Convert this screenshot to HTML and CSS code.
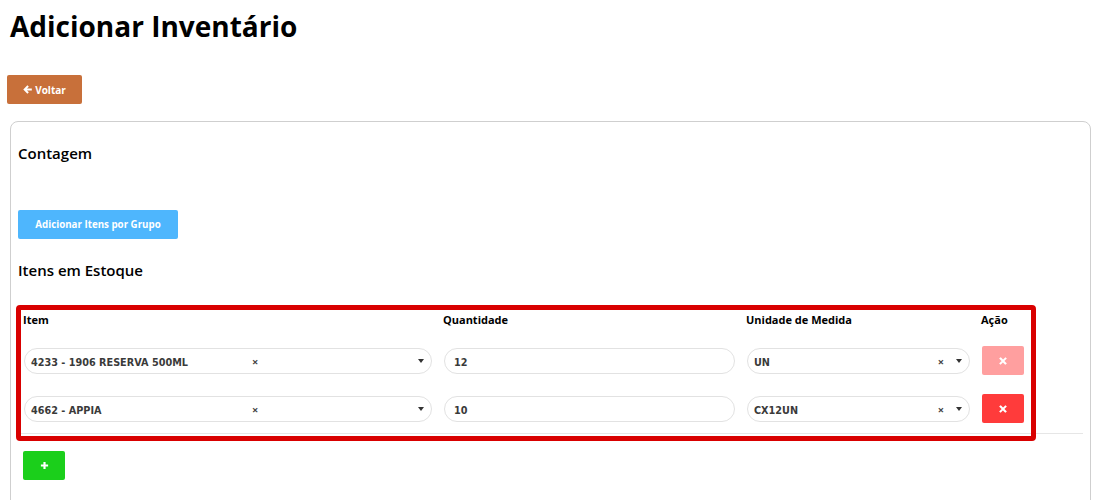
FILE: index.html
```html
<!DOCTYPE html>
<html lang="pt-BR">
<head>
<meta charset="utf-8">
<title>Adicionar Inventário</title>
<link rel="stylesheet" href="styles.css">
</head>
<body>
<main class="page">
  <h1 class="title">Adicionar Inventário</h1>
  <a class="btn btn-back" href="#">
    <svg class="ico-arrow" viewBox="0 0 10 10" width="9" height="9"><path d="M4.9 0.4 L6.5 2 L4.4 4 H9.8 V6 H4.4 L6.5 8 L4.9 9.6 L0.3 5 Z" fill="#fff"/></svg>
    <span>Voltar</span>
  </a>

  <section class="card">
    <h2 class="section-title">Contagem</h2>
    <button class="btn btn-group" type="button">Adicionar Itens por Grupo</button>
    <h2 class="section-title section-title--stock">Itens em Estoque</h2>

    <div class="stock">
      <div class="stock-table">
        <div class="grid-row grid-head">
          <div class="th">Item</div>
          <div class="th">Quantidade</div>
          <div class="th">Unidade de Medida</div>
          <div class="th">Ação</div>
        </div>

        <div class="grid-row">
          <div class="select select--item">
            <span class="select-text">4233 - 1906 RESERVA 500ML</span>
            <span class="select-clear">×</span>
            <span class="select-caret"></span>
          </div>
          <div class="input">12</div>
          <div class="select select--unit">
            <span class="select-text">UN</span>
            <span class="select-clear">×</span>
            <span class="select-caret"></span>
          </div>
          <button class="btn btn-del btn-del--disabled" type="button">
            <svg viewBox="0 0 10 10" width="8" height="8"><path d="M2 2 L8 8 M8 2 L2 8" stroke="#fff" stroke-width="2.6" stroke-linecap="square"/></svg>
          </button>
        </div>

        <div class="grid-row">
          <div class="select select--item">
            <span class="select-text">4662 - APPIA</span>
            <span class="select-clear">×</span>
            <span class="select-caret"></span>
          </div>
          <div class="input">10</div>
          <div class="select select--unit">
            <span class="select-text">CX12UN</span>
            <span class="select-clear">×</span>
            <span class="select-caret"></span>
          </div>
          <button class="btn btn-del" type="button">
            <svg viewBox="0 0 10 10" width="8" height="8"><path d="M2 2 L8 8 M8 2 L2 8" stroke="#fff" stroke-width="2.6" stroke-linecap="square"/></svg>
          </button>
        </div>
      </div>
      <div class="highlight"></div>
    </div>

    <button class="btn btn-add" type="button">
      <svg viewBox="0 0 10 10" width="9" height="9"><path d="M5 1 V9 M1 5 H9" stroke="#fff" stroke-width="2.4"/></svg>
    </button>
  </section>
</main>
</body>
</html>
```

FILE: styles.css
```css
* { box-sizing: border-box; }

html, body {
  margin: 0;
  background: #fff;
}

body {
  font-family: "Open Sans", "DejaVu Sans", sans-serif;
  color: #111;
}

.page {
  padding: 0 0 0 7px;
  width: 1091px;
}

.title {
  margin: 6px 0 0 3px;
  font-size: 28px;
  line-height: 40px;
  font-weight: 700;
  color: #000;
}

.btn {
  border: 0;
  border-radius: 2px;
  color: #fff;
  font-family: inherit;
  font-weight: 700;
  cursor: pointer;
  display: inline-flex;
  align-items: center;
  justify-content: center;
  text-decoration: none;
  padding: 0;
}

.btn-back {
  margin-top: 29px;
  width: 75px;
  height: 29px;
  background: #c8703a;
  font-size: 10px;
  gap: 3px;
}

.card {
  margin: 17px 0 0 3px;
  border: 1px solid #cfcfcf;
  border-radius: 8px;
  padding: 21px 7px 30px 7px;
  display: flex;
  flex-direction: column;
  align-items: flex-start;
}

.section-title {
  margin: 0;
  font-size: 15px;
  line-height: 20px;
  font-weight: 600;
  color: #000;
}

.btn-group {
  margin-top: 47px;
  width: 160px;
  height: 29px;
  background: #4eb6fd;
  font-size: 9.75px;
}

.section-title--stock {
  margin-top: 21px;
}

.stock {
  position: relative;
  margin-top: 26px;
  width: 100%;
}

.stock-table {
  padding: 6px 0 10px 6px;
  border-bottom: 1px solid #e6e6e6;
  display: flex;
  flex-direction: column;
}

.grid-row {
  display: grid;
  grid-template-columns: 408px 291px 223px 42px;
  column-gap: 12px;
  align-items: center;
  height: 29px;
}

.grid-row + .grid-row { margin-top: 19px; }
.grid-head + .grid-row { margin-top: 18px; }

.grid-head {
  height: 16px;
}

.th {
  font-size: 11px;
  line-height: 16px;
  font-weight: 700;
  color: #000;
  margin-left: -1px;
}

.select, .input {
  height: 26px;
  border: 1px solid #e2e2e2;
  border-radius: 13px;
  display: flex;
  align-items: center;
  padding: 0 0 0 6px;
  font-family: "DejaVu Sans", "Open Sans", sans-serif;
  font-size: 9.7px;
  font-weight: 700;
  color: #3a3a3a;
  background: #fff;
}

.select-text {
  flex: 1;
  white-space: nowrap;
  padding-top: 3px;
}

.select--item .select-text {
  flex: 0 0 221px;
}

.select--item .select-clear {
  flex: 1;
}

.select-clear {
  font-family: "Open Sans", sans-serif;
  font-size: 11px;
  font-weight: 700;
  color: #444;
  line-height: 1;
  padding-top: 1px;
}

.select-caret {
  width: 0;
  height: 0;
  border-left: 3.5px solid transparent;
  border-right: 3.5px solid transparent;
  border-top: 4px solid #333;
  margin: 1px 7px 0 0;
}

.select--unit .select-caret {
  margin-left: 12px;
}

.input {
  padding: 3px 0 0 9px;
}

.btn-del {
  width: 42px;
  height: 29px;
  background: #ff3b3b;
}

.btn-del--disabled {
  background: #ff9f9f;
}

.highlight {
  position: absolute;
  left: -2px;
  top: -1px;
  width: 1020px;
  height: 136px;
  border: 5px solid #d90000;
  border-radius: 4px;
  pointer-events: none;
}

.btn-add {
  margin: 17px 0 0 5px;
  width: 42px;
  height: 29px;
  background: #1bcf1b;
}
```
